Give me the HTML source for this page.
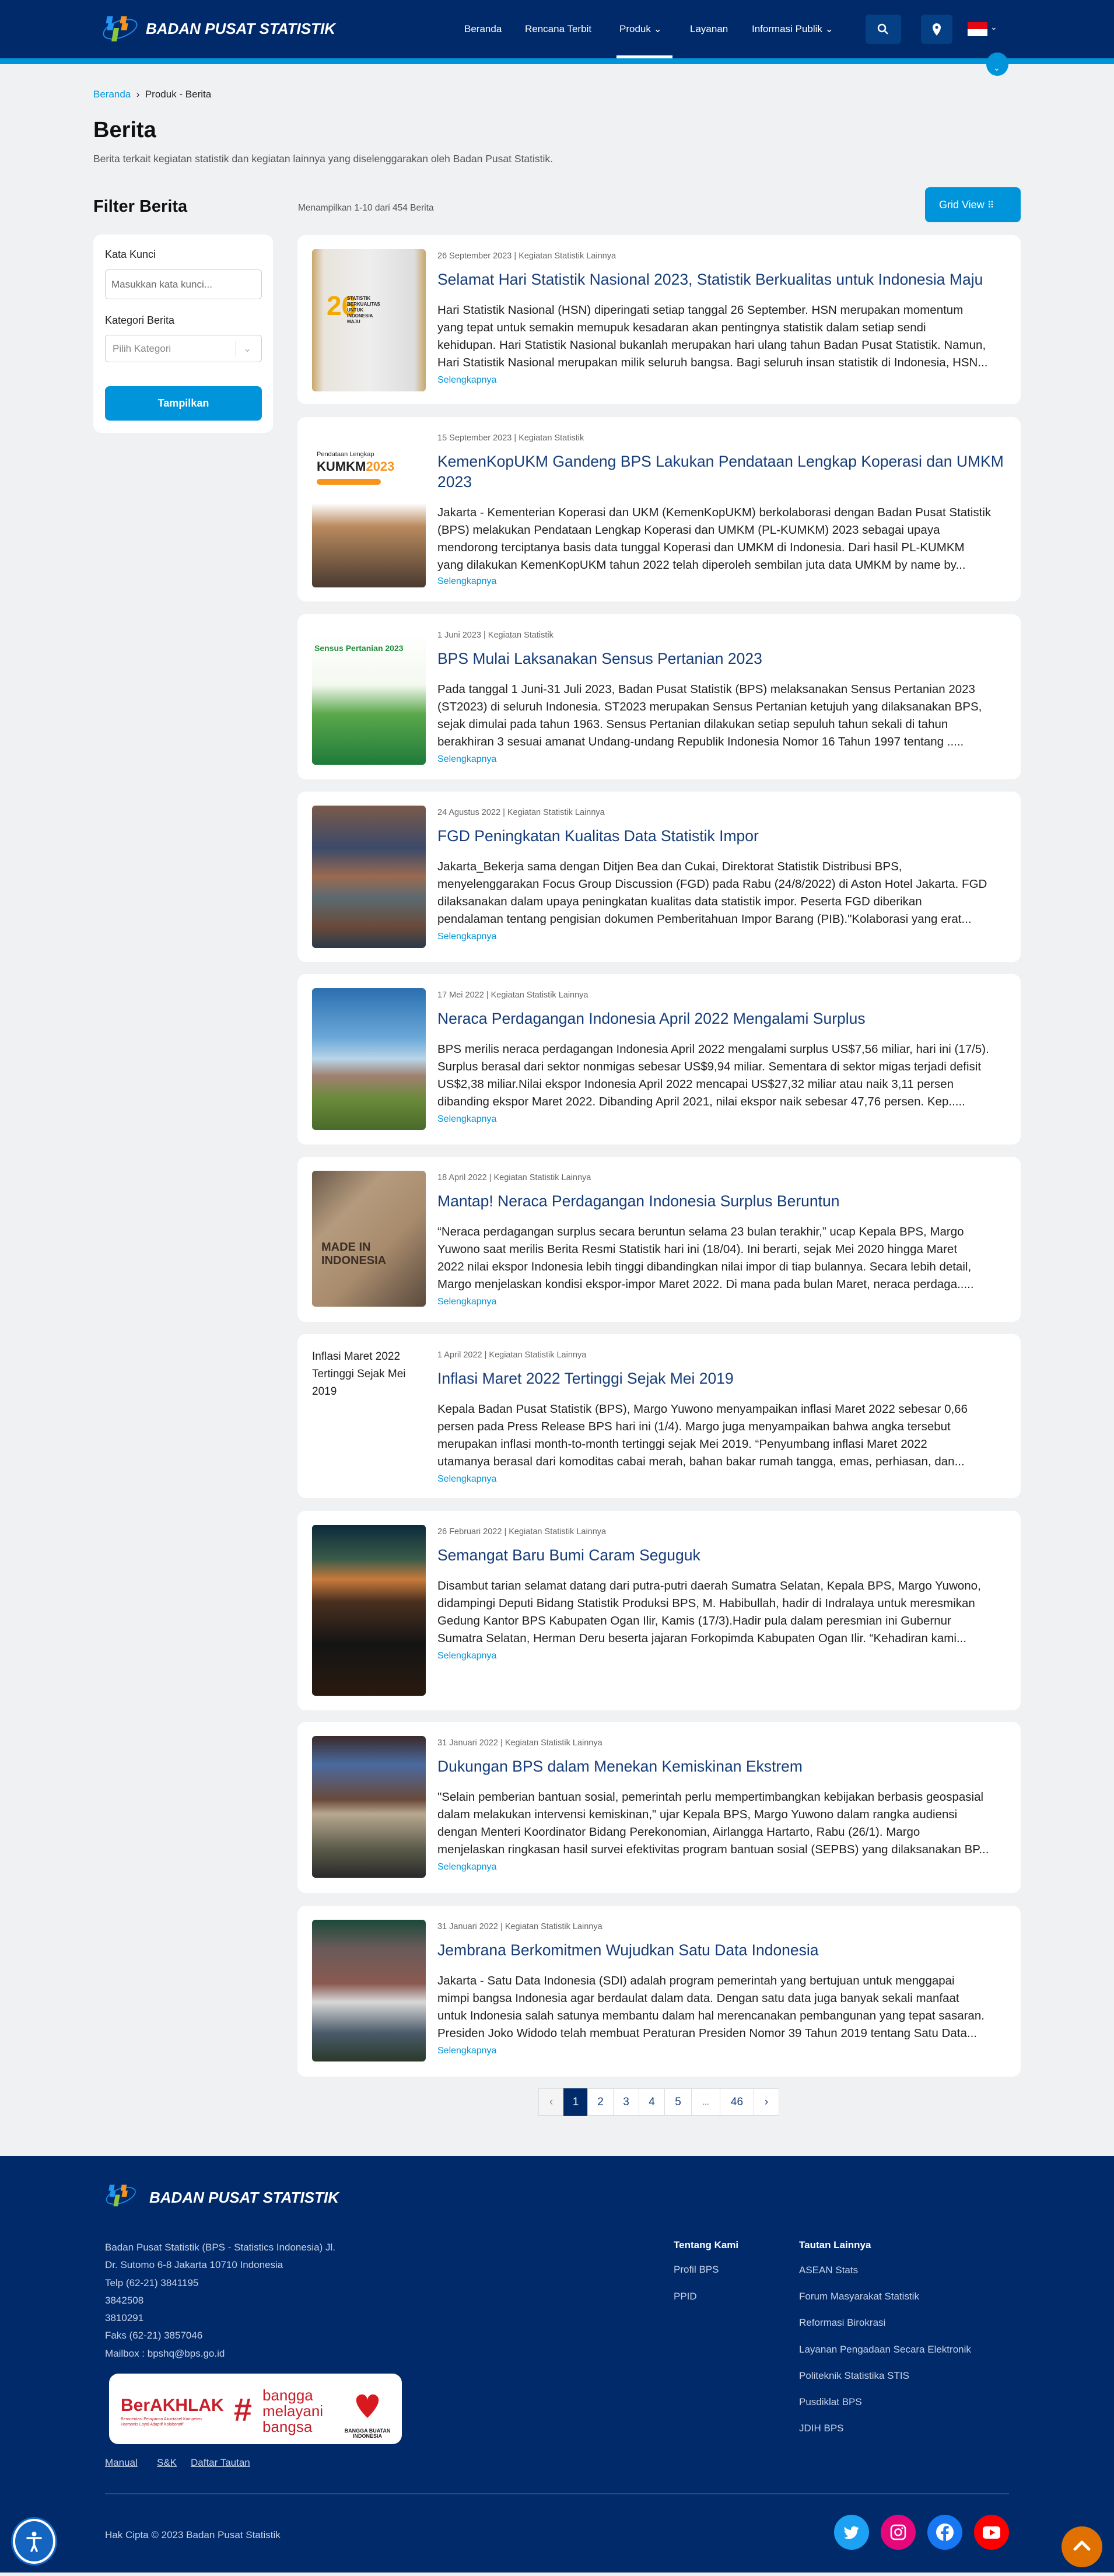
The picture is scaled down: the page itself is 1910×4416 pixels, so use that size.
<!DOCTYPE html>
<html><head><meta charset="utf-8"><style>
*{box-sizing:border-box;margin:0;padding:0}
body{width:1910px;height:4416px;background:#f0f1f3;font-family:"Liberation Sans",sans-serif;position:relative;overflow:hidden;color:#222}
.abs{position:absolute}
.hdr{left:0;top:0;width:1910px;height:100px;background:#012a6b}
.strip{left:0;top:100px;width:1910px;height:10px;background:#0095da}
.nav{top:40px;color:#fff;font-size:17px;white-space:nowrap}
.card{position:absolute;left:510px;width:1240px;background:#fff;border-radius:14px}
.img{position:absolute;left:25px;top:24px;width:195px;border-radius:6px;overflow:hidden}
.date{position:absolute;left:240px;top:28px;font-size:14.5px;color:#666;white-space:nowrap}
.ttl{position:absolute;left:240px;top:59px;font-size:26.5px;line-height:35px;color:#163d7a;white-space:nowrap}
.body{position:absolute;left:240px;width:990px;font-size:20.5px;line-height:30px;color:#222;white-space:nowrap;overflow:hidden}
.more{position:absolute;left:240px;font-size:16px;line-height:30px;color:#0095da}
.pg{position:absolute;top:3580px;height:47px;border:1px solid #ddd;background:#fff;font-size:19px;color:#163d7a;text-align:center;line-height:45px}
.ft{color:#c9d3e6;font-size:17px;white-space:nowrap}
.soc{position:absolute;top:4311px;width:60px;height:60px;border-radius:50%}
</style></head><body>
<div class="abs hdr"></div>
<div class="abs strip"></div>
<svg class="abs" style="left:172px;top:26px" width="72" height="50" viewBox="0 0 72 50">
<ellipse cx="34" cy="24" rx="30" ry="14" fill="none" stroke="#1e88e5" stroke-width="2" transform="rotate(-20 34 24)"/>
<rect x="12" y="2" width="10" height="12" fill="#2196f3" transform="skewX(-10)"/>
<rect x="16" y="14" width="10" height="12" fill="#2196f3" transform="skewX(-10)"/>
<rect x="36" y="2" width="10" height="12" fill="#f7941d" transform="skewX(-10)"/>
<rect x="40" y="14" width="10" height="12" fill="#f7941d" transform="skewX(-10)"/>
<rect x="27" y="22" width="9" height="11" fill="#8dc63f" transform="skewX(-10)"/>
<rect x="27" y="33" width="9" height="12" fill="#8dc63f" transform="skewX(-10)"/>
</svg>
<div class="abs" style="left:250px;top:34px;color:#fff;font-size:26px;font-weight:bold;font-style:italic;white-space:nowrap">BADAN PUSAT STATISTIK</div>
<div class="abs nav" style="left:796px">Beranda</div>
<div class="abs nav" style="left:900px">Rencana Terbit</div>
<div class="abs nav" style="left:1062px">Produk ⌄</div>
<div class="abs nav" style="left:1183px">Layanan</div>
<div class="abs nav" style="left:1289px">Informasi Publik ⌄</div>
<div class="abs" style="left:1057px;top:95px;width:96px;height:5px;background:#fff"></div>
<div class="abs" style="left:1484px;top:25px;width:61px;height:50px;background:#053f84;border-radius:6px"></div>
<svg class="abs" style="left:1503px;top:39px" width="22" height="22" viewBox="0 0 22 22"><circle cx="9" cy="9" r="6" fill="none" stroke="#fff" stroke-width="2.5"/><path d="M13 13l6 6" stroke="#fff" stroke-width="2.5"/></svg>
<div class="abs" style="left:1579px;top:25px;width:54px;height:50px;background:#053f84;border-radius:6px"></div>
<svg class="abs" style="left:1597px;top:39px" width="18" height="24" viewBox="0 0 18 24"><path d="M9 1a7 7 0 0 0-7 7c0 6 7 14 7 14s7-8 7-14a7 7 0 0 0-7-7z" fill="#fff"/><circle cx="9" cy="8" r="2.5" fill="#053f84"/></svg>
<div class="abs" style="left:1659px;top:38px;width:34px;height:12px;background:#e30613"></div>
<div class="abs" style="left:1659px;top:50px;width:34px;height:12px;background:#fff"></div>
<div class="abs" style="left:1698px;top:38px;color:#fff;font-size:14px">⌄</div>
<div class="abs" style="left:1691px;top:90px;width:38px;height:40px;border-radius:50%;background:#0095da"></div>
<div class="abs" style="left:1703px;top:108px;color:#fff;font-size:14px">⌄</div>

<div class="abs" style="left:160px;top:152px;font-size:17px;white-space:nowrap"><span style="color:#0095da">Beranda</span> &nbsp;›&nbsp; Produk - Berita</div>
<div class="abs" style="left:160px;top:202px;font-size:38px;font-weight:bold;color:#111">Berita</div>
<div class="abs" style="left:160px;top:262px;font-size:17.5px;color:#555;white-space:nowrap">Berita terkait kegiatan statistik dan kegiatan lainnya yang diselenggarakan oleh Badan Pusat Statistik.</div>
<div class="abs" style="left:160px;top:338px;font-size:29px;font-weight:bold;color:#111">Filter Berita</div>
<div class="abs" style="left:511px;top:348px;font-size:15.5px;color:#555">Menampilkan 1-10 dari 454 Berita</div>
<div class="abs" style="left:1586px;top:321px;width:164px;height:60px;background:#0095da;border-radius:8px;color:#fff;font-size:18px;line-height:60px;padding-left:24px">Grid View <span style="font-size:16px;letter-spacing:-2px">⠿</span></div>

<div class="abs" style="left:160px;top:402px;width:308px;height:340px;background:#fff;border-radius:14px"></div>
<div class="abs" style="left:180px;top:426px;font-size:18px">Kata Kunci</div>
<div class="abs" style="left:180px;top:462px;width:269px;height:51px;border:1px solid #ccc;border-radius:6px;font-size:17px;color:#666;line-height:49px;padding-left:10px">Masukkan kata kunci...</div>
<div class="abs" style="left:180px;top:539px;font-size:18px">Kategori Berita</div>
<div class="abs" style="left:180px;top:574px;width:269px;height:47px;border:1px solid #ccc;border-radius:6px;font-size:17px;color:#888;line-height:45px;padding-left:12px">Pilih Kategori<span style="position:absolute;left:223px;top:10px;height:26px;border-left:1px solid #ccc"></span><span style="position:absolute;left:236px;top:0;color:#aaa">⌄</span></div>
<div class="abs" style="left:180px;top:662px;width:269px;height:59px;background:#0095da;border-radius:8px;color:#fff;font-size:18px;font-weight:bold;text-align:center;line-height:59px">Tampilkan</div>

<div class="card" style="top:403px;height:290px">
<div class="img" style="height:244px;background:linear-gradient(90deg,#c9a66b 0,#e8e4dc 10%,#eee 50%,#ddd 90%,#c9a66b 100%)"><div style="position:absolute;left:25px;top:70px;font-size:46px;font-weight:bold;color:#f2a900">26</div><div style="position:absolute;left:60px;top:80px;font-size:8px;font-weight:bold;line-height:10px">STATISTIK<br>BERKUALITAS<br>UNTUK<br>INDONESIA<br>MAJU</div></div>
<div class="date">26 September 2023 | Kegiatan Statistik Lainnya</div>
<div class="ttl">Selamat Hari Statistik Nasional 2023, Statistik Berkualitas untuk Indonesia Maju</div>
<div class="body" style="top:114px">Hari Statistik Nasional (HSN) diperingati setiap tanggal 26 September. HSN merupakan momentum<br>yang tepat untuk semakin memupuk kesadaran akan pentingnya statistik dalam setiap sendi<br>kehidupan. Hari Statistik Nasional bukanlah merupakan hari ulang tahun Badan Pusat Statistik. Namun,<br>Hari Statistik Nasional merupakan milik seluruh bangsa. Bagi seluruh insan statistik di Indonesia, HSN...</div>
<div class="more" style="top:234px">Selengkapnya</div>
</div>

<div class="card" style="top:715px;height:316px">
<div class="img" style="top:30px;height:262px;background:linear-gradient(180deg,#fff 0,#fff 45%,#b98a5e 60%,#4a3a30 100%)"><div style="position:absolute;left:8px;top:28px;font-size:11px">Pendataan Lengkap</div><div style="position:absolute;left:8px;top:42px;font-size:22px;font-weight:bold;color:#222">KUMKM<span style="color:#f7941d">2023</span></div><div style="position:absolute;left:8px;top:76px;width:110px;height:10px;background:#f7941d;border-radius:5px"></div></div>
<div class="date">15 September 2023 | Kegiatan Statistik</div>
<div class="ttl">KemenKopUKM Gandeng BPS Lakukan Pendataan Lengkap Koperasi dan UMKM<br>2023</div>
<div class="body" style="top:149px">Jakarta - Kementerian Koperasi dan UKM (KemenKopUKM) berkolaborasi dengan Badan Pusat Statistik<br>(BPS) melakukan Pendataan Lengkap Koperasi dan UMKM (PL-KUMKM) 2023 sebagai upaya<br>mendorong terciptanya basis data tunggal Koperasi dan UMKM di Indonesia. Dari hasil PL-KUMKM<br>yang dilakukan KemenKopUKM tahun 2022 telah diperoleh sembilan juta data UMKM by name by...</div>
<div class="more" style="top:267px">Selengkapnya</div>
</div>

<div class="card" style="top:1053px;height:283px">
<div class="img" style="top:30px;height:228px;background:linear-gradient(180deg,#fff 0,#f4f9f0 40%,#5aa84a 62%,#1f7a3a 100%)"><div style="position:absolute;left:4px;top:20px;font-size:14px;font-weight:bold;color:#1f8a3a">Sensus Pertanian 2023</div></div>
<div class="date">1 Juni 2023 | Kegiatan Statistik</div>
<div class="ttl">BPS Mulai Laksanakan Sensus Pertanian 2023</div>
<div class="body" style="top:114px">Pada tanggal 1 Juni-31 Juli 2023, Badan Pusat Statistik (BPS) melaksanakan Sensus Pertanian 2023<br>(ST2023) di seluruh Indonesia. ST2023 merupakan Sensus Pertanian ketujuh yang dilaksanakan BPS,<br>sejak dimulai pada tahun 1963. Sensus Pertanian dilakukan setiap sepuluh tahun sekali di tahun<br>berakhiran 3 sesuai amanat Undang-undang Republik Indonesia Nomor 16 Tahun 1997 tentang .....</div>
<div class="more" style="top:234px">Selengkapnya</div>
</div>

<div class="card" style="top:1357px;height:292px">
<div class="img" style="height:244px;background:linear-gradient(180deg,#7a5a4a 0,#3b4a6a 30%,#9a6a50 50%,#5a6a70 65%,#6a4a3a 85%,#2a3a4a 100%)"></div>
<div class="date">24 Agustus 2022 | Kegiatan Statistik Lainnya</div>
<div class="ttl">FGD Peningkatan Kualitas Data Statistik Impor</div>
<div class="body" style="top:114px">Jakarta_Bekerja sama dengan Ditjen Bea dan Cukai, Direktorat Statistik Distribusi BPS,<br>menyelenggarakan Focus Group Discussion (FGD) pada Rabu (24/8/2022) di Aston Hotel Jakarta. FGD<br>dilaksanakan dalam upaya peningkatan kualitas data statistik impor. Peserta FGD diberikan<br>pendalaman tentang pengisian dokumen Pemberitahuan Impor Barang (PIB)."Kolaborasi yang erat...</div>
<div class="more" style="top:234px">Selengkapnya</div>
</div>

<div class="card" style="top:1670px;height:292px">
<div class="img" style="height:243px;background:linear-gradient(180deg,#2a6fb0 0,#6aa8d8 35%,#b8d4e8 50%,#a08070 62%,#6a8a3a 78%,#4a6a2a 100%)"></div>
<div class="date">17 Mei 2022 | Kegiatan Statistik Lainnya</div>
<div class="ttl">Neraca Perdagangan Indonesia April 2022 Mengalami Surplus</div>
<div class="body" style="top:114px">BPS merilis neraca perdagangan Indonesia April 2022 mengalami surplus US$7,56 miliar, hari ini (17/5).<br>Surplus berasal dari sektor nonmigas sebesar US$9,94 miliar. Sementara di sektor migas terjadi defisit<br>US$2,38 miliar.Nilai ekspor Indonesia April 2022 mencapai US$27,32 miliar atau naik 3,11 persen<br>dibanding ekspor Maret 2022. Dibanding April 2021, nilai ekspor naik sebesar 47,76 persen. Kep.....</div>
<div class="more" style="top:234px">Selengkapnya</div>
</div>

<div class="card" style="top:1983px;height:283px">
<div class="img" style="height:233px;background:linear-gradient(135deg,#6a5a4a 0,#b59b7e 30%,#a88b6c 60%,#5a4a3e 100%)"><div style="position:absolute;left:16px;top:120px;font-size:20px;font-weight:bold;color:#3a2e26">MADE IN INDONESIA</div></div>
<div class="date">18 April 2022 | Kegiatan Statistik Lainnya</div>
<div class="ttl">Mantap! Neraca Perdagangan Indonesia Surplus Beruntun</div>
<div class="body" style="top:114px">“Neraca perdagangan surplus secara beruntun selama 23 bulan terakhir,” ucap Kepala BPS, Margo<br>Yuwono saat merilis Berita Resmi Statistik hari ini (18/04). Ini berarti, sejak Mei 2020 hingga Maret<br>2022 nilai ekspor Indonesia lebih tinggi dibandingkan nilai impor di tiap bulannya. Secara lebih detail,<br>Margo menjelaskan kondisi ekspor-impor Maret 2022. Di mana pada bulan Maret, neraca perdaga.....</div>
<div class="more" style="top:234px">Selengkapnya</div>
</div>

<div class="card" style="top:2287px;height:281px">
<div class="img" style="height:100px;font-size:19px;line-height:30px;color:#222;overflow:visible">Inflasi Maret 2022 Tertinggi Sejak Mei 2019</div>
<div class="date">1 April 2022 | Kegiatan Statistik Lainnya</div>
<div class="ttl">Inflasi Maret 2022 Tertinggi Sejak Mei 2019</div>
<div class="body" style="top:114px">Kepala Badan Pusat Statistik (BPS), Margo Yuwono menyampaikan inflasi Maret 2022 sebesar 0,66<br>persen pada Press Release BPS hari ini (1/4). Margo juga menyampaikan bahwa angka tersebut<br>merupakan inflasi month-to-month tertinggi sejak Mei 2019. “Penyumbang inflasi Maret 2022<br>utamanya berasal dari komoditas cabai merah, bahan bakar rumah tangga, emas, perhiasan, dan...</div>
<div class="more" style="top:234px">Selengkapnya</div>
</div>

<div class="card" style="top:2590px;height:342px">
<div class="img" style="height:293px;background:linear-gradient(180deg,#0a2a3a 0,#3a5a4a 20%,#c87a3a 32%,#4a3020 45%,#141414 70%,#2a1a10 100%)"></div>
<div class="date">26 Februari 2022 | Kegiatan Statistik Lainnya</div>
<div class="ttl">Semangat Baru Bumi Caram Seguguk</div>
<div class="body" style="top:114px">Disambut tarian selamat datang dari putra-putri daerah Sumatra Selatan, Kepala BPS, Margo Yuwono,<br>didampingi Deputi Bidang Statistik Produksi BPS, M. Habibullah, hadir di Indralaya untuk meresmikan<br>Gedung Kantor BPS Kabupaten Ogan Ilir, Kamis (17/3).Hadir pula dalam peresmian ini Gubernur<br>Sumatra Selatan, Herman Deru beserta jajaran Forkopimda Kabupaten Ogan Ilir. “Kehadiran kami...</div>
<div class="more" style="top:234px">Selengkapnya</div>
</div>

<div class="card" style="top:2952px;height:293px">
<div class="img" style="height:243px;background:linear-gradient(180deg,#3a2a2a 0,#4a6aa0 20%,#6a4a3a 45%,#b8a890 55%,#5a5a4a 80%,#2a2a2a 100%)"></div>
<div class="date">31 Januari 2022 | Kegiatan Statistik Lainnya</div>
<div class="ttl">Dukungan BPS dalam Menekan Kemiskinan Ekstrem</div>
<div class="body" style="top:114px">"Selain pemberian bantuan sosial, pemerintah perlu mempertimbangkan kebijakan berbasis geospasial<br>dalam melakukan intervensi kemiskinan," ujar Kepala BPS, Margo Yuwono dalam rangka audiensi<br>dengan Menteri Koordinator Bidang Perekonomian, Airlangga Hartarto, Rabu (26/1). Margo<br>menjelaskan ringkasan hasil survei efektivitas program bantuan sosial (SEPBS) yang dilaksanakan BP...</div>
<div class="more" style="top:234px">Selengkapnya</div>
</div>

<div class="card" style="top:3267px;height:293px">
<div class="img" style="height:243px;background:linear-gradient(180deg,#1a4a3a 0,#6a5a5a 20%,#8a5a50 45%,#d8d8d8 58%,#4a5a6a 80%,#2a3a2a 100%)"></div>
<div class="date">31 Januari 2022 | Kegiatan Statistik Lainnya</div>
<div class="ttl">Jembrana Berkomitmen Wujudkan Satu Data Indonesia</div>
<div class="body" style="top:114px">Jakarta - Satu Data Indonesia (SDI) adalah program pemerintah yang bertujuan untuk menggapai<br>mimpi bangsa Indonesia agar berdaulat dalam data. Dengan satu data juga banyak sekali manfaat<br>untuk Indonesia salah satunya membantu dalam hal merencanakan pembangunan yang tepat sasaran.<br>Presiden Joko Widodo telah membuat Peraturan Presiden Nomor 39 Tahun 2019 tentang Satu Data...</div>
<div class="more" style="top:234px">Selengkapnya</div>
</div>

<div class="pg" style="left:923px;width:44px;background:#f4f4f4;color:#888">‹</div>
<div class="pg" style="left:966px;width:42px;background:#012a6b;color:#fff;border-color:#012a6b">1</div>
<div class="pg" style="left:1007px;width:45px">2</div>
<div class="pg" style="left:1051px;width:45px">3</div>
<div class="pg" style="left:1095px;width:45px">4</div>
<div class="pg" style="left:1139px;width:47px">5</div>
<div class="pg" style="left:1185px;width:50px;font-size:14px;color:#666">...</div>
<div class="pg" style="left:1234px;width:59px">46</div>
<div class="pg" style="left:1292px;width:44px">›</div>

<div class="abs" style="left:0;top:3696px;width:1910px;height:714px;background:#012a6b"></div>
<svg class="abs" style="left:178px;top:3741px" width="62" height="48" viewBox="0 0 72 50">
<ellipse cx="34" cy="24" rx="30" ry="14" fill="none" stroke="#1e88e5" stroke-width="2" transform="rotate(-20 34 24)"/>
<rect x="12" y="2" width="10" height="12" fill="#2196f3" transform="skewX(-10)"/>
<rect x="16" y="14" width="10" height="12" fill="#2196f3" transform="skewX(-10)"/>
<rect x="36" y="2" width="10" height="12" fill="#f7941d" transform="skewX(-10)"/>
<rect x="40" y="14" width="10" height="12" fill="#f7941d" transform="skewX(-10)"/>
<rect x="27" y="22" width="9" height="11" fill="#8dc63f" transform="skewX(-10)"/>
<rect x="27" y="33" width="9" height="12" fill="#8dc63f" transform="skewX(-10)"/>
</svg>
<div class="abs" style="left:256px;top:3752px;color:#fff;font-size:26px;font-weight:bold;font-style:italic;white-space:nowrap">BADAN PUSAT STATISTIK</div>
<div class="abs ft" style="left:180px;top:3838px;line-height:30.3px">Badan Pusat Statistik (BPS - Statistics Indonesia) Jl.<br>Dr. Sutomo 6-8 Jakarta 10710 Indonesia<br>Telp (62-21) 3841195<br>3842508<br>3810291<br>Faks (62-21) 3857046<br>Mailbox : bpshq@bps.go.id</div>
<div class="abs" style="left:187px;top:4069px;width:502px;height:121px;background:#fff;border-radius:16px"></div>
<div class="abs" style="left:207px;top:4107px;font-size:30px;font-weight:bold;color:#c8202a">BerAKHLAK</div>
<div class="abs" style="left:207px;top:4143px;font-size:7px;color:#c8202a;line-height:9px">Berorientasi Pelayanan Akuntabel Kompeten<br>Harmonis Loyal Adaptif Kolaboratif</div>
<div class="abs" style="left:400px;top:4098px;font-size:56px;font-weight:bold;color:#c8202a;font-style:italic">#</div>
<div class="abs" style="left:450px;top:4093px;font-size:26px;line-height:27px;color:#c8202a">bangga<br>melayani<br>bangsa</div>
<svg class="abs" style="left:590px;top:4085px" width="80" height="95" viewBox="0 0 80 95"><path d="M40 60C20 40 15 25 28 20c7-2 12 4 12 10 0-6 5-12 12-10 13 5 8 20-12 40z" fill="#d71920"/><text x="40" y="85" font-size="9" font-weight="bold" text-anchor="middle" fill="#222" font-family="Liberation Sans">BANGGA BUATAN</text><text x="40" y="94" font-size="9" font-weight="bold" text-anchor="middle" fill="#222" font-family="Liberation Sans">INDONESIA</text></svg>
<div class="abs ft" style="left:180px;top:4212px;text-decoration:underline">Manual</div>
<div class="abs ft" style="left:269px;top:4212px;text-decoration:underline">S&amp;K</div>
<div class="abs ft" style="left:327px;top:4212px;text-decoration:underline">Daftar Tautan</div>
<div class="abs" style="left:1155px;top:3839px;color:#fff;font-weight:bold;font-size:17px">Tentang Kami</div>
<div class="abs ft" style="left:1155px;top:3881px">Profil BPS</div>
<div class="abs ft" style="left:1155px;top:3927px">PPID</div>
<div class="abs" style="left:1370px;top:3839px;color:#fff;font-weight:bold;font-size:17px">Tautan Lainnya</div>
<div class="abs ft" style="left:1370px;top:3869px;line-height:45.2px">ASEAN Stats<br>Forum Masyarakat Statistik<br>Reformasi Birokrasi<br>Layanan Pengadaan Secara Elektronik<br>Politeknik Statistika STIS<br>Pusdiklat BPS<br>JDIH BPS</div>
<div class="abs" style="left:180px;top:4274px;width:1550px;height:2px;background:#2b4b85"></div>
<div class="abs ft" style="left:180px;top:4336px">Hak Cipta © 2023 Badan Pusat Statistik</div>
<div class="soc" style="left:1430px;background:#1da1f2"><svg width="60" height="60" viewBox="0 0 60 60"><path d="M42 22c-1 .5-2 .8-3 .9 1-.6 2-1.6 2.3-2.7-1 .6-2.1 1-3.3 1.3a5.2 5.2 0 0 0-8.9 4.7c-4.3-.2-8.1-2.3-10.7-5.4-1.5 2.5-.6 5.5 1.6 7-.8 0-1.6-.3-2.3-.6 0 2.5 1.8 4.6 4.2 5.1-.8.2-1.6.2-2.4.1.7 2.1 2.6 3.6 4.9 3.6A10.5 10.5 0 0 1 17 39.3 14.8 14.8 0 0 0 25 41.6c9.7 0 15-8 15-15v-.7c1-.7 1.9-1.7 2-3.9z" fill="#fff"/></svg></div>
<div class="soc" style="left:1510px;background:#e4087a"><svg width="60" height="60" viewBox="0 0 60 60"><rect x="18" y="18" width="24" height="24" rx="6" fill="none" stroke="#fff" stroke-width="2.5"/><circle cx="30" cy="30" r="5.5" fill="none" stroke="#fff" stroke-width="2.5"/><circle cx="37" cy="23" r="1.5" fill="#fff"/></svg></div>
<div class="soc" style="left:1590px;background:#1877f2"><svg width="60" height="60" viewBox="0 0 60 60"><circle cx="30" cy="30" r="15" fill="#fff"/><path d="M32 46V33h4l.6-4.5H32v-2.8c0-1.3.4-2.2 2.2-2.2h2.4v-4c-.4 0-1.8-.2-3.5-.2-3.4 0-5.8 2.1-5.8 6v3.2h-4V33h4v13z" fill="#1877f2"/></svg></div>
<div class="soc" style="left:1670px;background:#ff0000"><svg width="60" height="60" viewBox="0 0 60 60"><rect x="15" y="20" width="30" height="21" rx="5" fill="#fff"/><path d="M27 25v11l9-5.5z" fill="#ff0000"/></svg></div>
<div class="abs" style="left:22px;top:4318px;width:73px;height:77px;border-radius:50%;background:#1565c0;border:4px solid #fff;box-shadow:0 0 0 3px #1565c0"></div>
<svg class="abs" style="left:40px;top:4337px" width="37" height="40" viewBox="0 0 37 40"><circle cx="18.5" cy="7" r="4" fill="#fff"/><path d="M7 14h23M18.5 14v12M14 36l4.5-10 4.5 10" stroke="#fff" stroke-width="3.5" fill="none" stroke-linecap="round"/></svg>
<div class="abs" style="left:1820px;top:4331px;width:70px;height:70px;border-radius:50%;background:#e07000"></div>
<svg class="abs" style="left:1838px;top:4352px" width="34" height="24" viewBox="0 0 34 24"><path d="M5 18L17 6l12 12" stroke="#fff" stroke-width="5" fill="none" stroke-linecap="round" stroke-linejoin="round"/></svg>
</body></html>
